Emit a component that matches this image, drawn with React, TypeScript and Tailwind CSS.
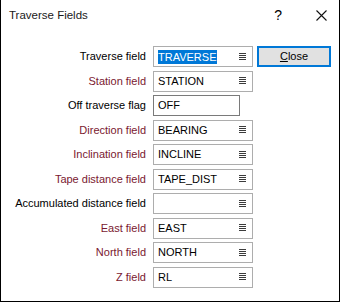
import { ReactNode } from 'react';

type Row = { label: string; value: string; red?: boolean; picker?: boolean; selected?: boolean };

const rows: Row[] = [
  { label: 'Traverse field', value: 'TRAVERSE', picker: true, selected: true },
  { label: 'Station field', value: 'STATION', red: true, picker: true },
  { label: 'Off traverse flag', value: 'OFF' },
  { label: 'Direction field', value: 'BEARING', red: true, picker: true },
  { label: 'Inclination field', value: 'INCLINE', red: true, picker: true },
  { label: 'Tape distance field', value: 'TAPE_DIST', red: true, picker: true },
  { label: 'Accumulated distance field', value: '', picker: true },
  { label: 'East field', value: 'EAST', red: true, picker: true },
  { label: 'North field', value: 'NORTH', red: true, picker: true },
  { label: 'Z field', value: 'RL', red: true, picker: true },
];

function ListIcon() {
  return (
    <svg width="7" height="8" viewBox="0 0 7 8" className="shrink-0">
      {[0.5, 2.5, 4.5, 6.5].map((y) => (
        <line key={y} x1="0" x2="7" y1={y} y2={y} stroke="#3c3c3c" strokeWidth="1" />
      ))}
    </svg>
  );
}

function Field({ row }: { row: Row }): ReactNode {
  if (!row.picker) {
    return (
      <div className="w-[87px] h-[21px] border border-[#7a7a7a] flex items-center pl-[4px]">
        <span>{row.value}</span>
      </div>
    );
  }
  return (
    <div className="w-[100px] h-[21px] border border-[#adadad] flex items-center justify-between pl-[4px] pr-[6px]">
      {row.selected ? (
        <span className="bg-[#0078d7] text-white leading-[14px] pr-[1px]">{row.value}</span>
      ) : (
        <span>{row.value}</span>
      )}
      <ListIcon />
    </div>
  );
}

export default function App() {
  return (
    <div
      className="w-[340px] h-[302px] bg-white border-x border-b border-black text-[11px] text-black"
      style={{ fontFamily: '"Liberation Sans", Arial, sans-serif' }}
    >
      {/* Title bar */}
      <div className="h-[31px] flex items-center pl-[8px] pr-[12px]">
        <span className="text-[11.5px] text-[#1a1a1a] flex-1">Traverse Fields</span>
        <span className="text-[14px] mr-[34px]">?</span>
        <svg width="11" height="11" viewBox="0 0 11 11">
          <path d="M0.5 0.5 L10.5 10.5 M10.5 0.5 L0.5 10.5" stroke="#111" strokeWidth="1.1" />
        </svg>
      </div>

      <div className="flex pt-[15px]">
        <div className="flex flex-col gap-[3.5px]">
          {rows.map((row) => (
            <div key={row.label} className="flex items-center h-[21px]">
              <span className={`w-[145px] text-right ${row.red ? 'text-[#7a1830]' : 'text-black'}`}>
                {row.label}
              </span>
              <div className="ml-[7px]">
                <Field row={row} />
              </div>
            </div>
          ))}
        </div>
        <button className="ml-[4px] w-[74px] h-[21px] bg-[#e1e1e1] border-2 border-[#0078d7] flex items-center justify-center">
          <span>
            <span className="underline">C</span>lose
          </span>
        </button>
      </div>
    </div>
  );
}
